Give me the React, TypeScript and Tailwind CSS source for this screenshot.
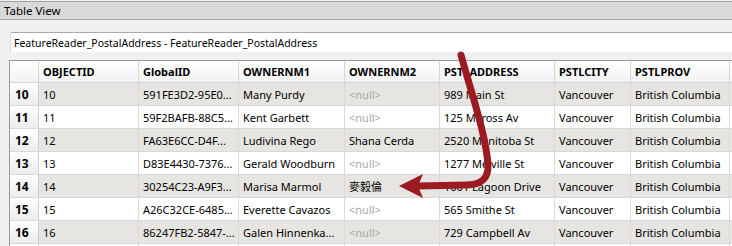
const cols = [
  { key: 'OBJECTID', w: 'w-[100px]' },
  { key: 'GlobalID', w: 'w-[100px]' },
  { key: 'OWNERNM1', w: 'w-[106px]' },
  { key: 'OWNERNM2', w: 'w-[95px]' },
  { key: 'PSTLADDRESS', w: 'w-[115px]' },
  { key: 'PSTLCITY', w: 'w-[76px]' },
  { key: 'PSTLPROV', w: 'w-[99px]' },
];

const rows = [
  ['10', '10', '591FE3D2-95E0...', 'Many Purdy', null, '989 Main St', 'Vancouver', 'British Columbia'],
  ['11', '11', '59F2BAFB-88C5...', 'Kent Garbett', null, '125 Milross Av', 'Vancouver', 'British Columbia'],
  ['12', '12', 'FA63E6CC-D4F...', 'Ludivina Rego', 'Shana Cerda', '2520 Manitoba St', 'Vancouver', 'British Columbia'],
  ['13', '13', 'D83E4430-7376...', 'Gerald Woodburn', null, '1277 Melville St', 'Vancouver', 'British Columbia'],
  ['14', '14', '30254C23-A9F3...', 'Marisa Marmol', '麥毅倫', '1001 Lagoon Drive', 'Vancouver', 'British Columbia'],
  ['15', '15', 'A26C32CE-6485...', 'Everette Cavazos', null, '565 Smithe St', 'Vancouver', 'British Columbia'],
  ['16', '16', '86247FB2-5847-...', 'Galen Hinnenka...', null, '729 Campbell Av', 'Vancouver', 'British Columbia'],
  // next row only peeks in at the bottom edge
  ['', '', '', '', '', '', '', ''],
];

const font = "font-['Noto_Sans','Noto_Sans_CJK_TC',sans-serif]";

export default function App() {
  return (
    <div className={`relative w-[732px] h-[246px] overflow-hidden bg-[#f0f0f0] pt-px text-[11px] text-black ${font}`}>
      <div className="h-[19px] border-y border-[#a3a3a3] bg-[#d9d9d9] pl-[4px] text-[11.5px] leading-[18px]">Table View</div>

      <div className="pt-[12px] pl-[10px]">
        <div className="h-[20px] rounded-tl-[2px] border-t border-l border-t-[#a9a9a9] border-l-[#dcdcdc] bg-white pl-[3px] text-[10.5px] leading-[20px] whitespace-nowrap">
          FeatureReader_PostalAddress - FeatureReader_PostalAddress
        </div>
      </div>

      <div className="mt-[8px] ml-[9px] border-t border-l border-[#9a9a9a] bg-white">
        <div className="flex h-[22px] border-b border-[#d5d5d5] bg-linear-to-b from-white to-[#f2f2f2]">
          <div className="w-[29px] shrink-0 border-r border-[#d5d5d5]" />
          {cols.map(c => (
            <div key={c.key} className={`${c.w} shrink-0 border-r border-[#d5d5d5] pl-[4px] font-bold leading-[22px]`}>
              {c.key}
            </div>
          ))}
        </div>

        {rows.map((r, i) => (
          <div
            key={i}
            className={`flex h-[23px] border-b border-[#d8d8d8] ${i % 2 === 0 ? 'bg-[#e7e5e1]' : 'bg-white'}`}
          >
            <div className="w-[29px] shrink-0 border-r border-[#cfcfcf] bg-linear-to-b from-white to-[#ececec] pl-[5px] text-[12px] font-bold leading-[23px]">
              {r[0]}
            </div>
            {r.slice(1).map((v, j) => (
              <div
                key={j}
                className={`${cols[j].w} shrink-0 overflow-hidden border-r border-[#dadada] pl-[4px] leading-[23px] whitespace-nowrap ${v === null ? 'text-[#a8a8a8]' : ''}`}
              >
                {v === null ? '<null>' : v}
              </div>
            ))}
          </div>
        ))}
      </div>

      <svg className="pointer-events-none absolute inset-0" width="732" height="246" viewBox="0 0 732 246">
        <path
          d="M461 55 C472 95, 486 135, 488 165 Q489 185, 466 185 L418 186"
          fill="none"
          stroke="#9c1b22"
          strokeWidth="7"
          strokeLinecap="round"
        />
        <path d="M399 186 L423 174 L418 186 L423 198 Z" fill="#9c1b22" />
      </svg>
    </div>
  );
}
